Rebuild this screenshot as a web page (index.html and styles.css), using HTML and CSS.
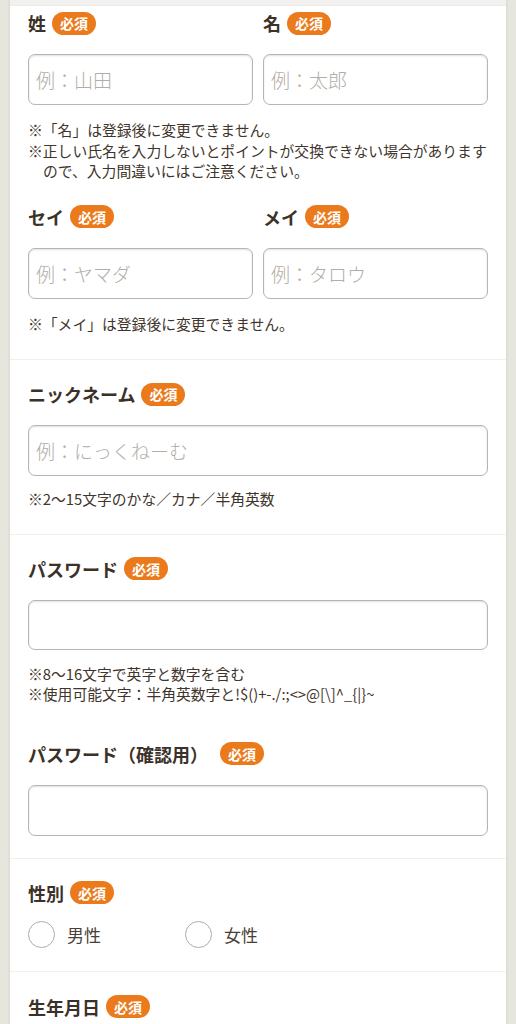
FILE: index.html
```html
<!DOCTYPE html>
<html lang="ja">
<head>
<meta charset="utf-8">
<title>会員登録</title>
<link rel="stylesheet" href="styles.css">
</head>
<body>
<div class="page">
  <div class="card">
    <div class="topbar"></div>

    <section class="sec sec-first">
      <div class="pair">
        <div class="field">
          <div class="label">姓<span class="badge">必須</span></div>
          <input class="input" type="text" placeholder="例：山田">
        </div>
        <div class="field">
          <div class="label">名<span class="badge">必須</span></div>
          <input class="input" type="text" placeholder="例：太郎">
        </div>
      </div>
      <div class="notes">
        <p class="note">※「名」は登録後に変更できません。</p>
        <p class="note">※正しい氏名を入力しないとポイントが交換できない場合がありますので、入力間違いにはご注意ください。</p>
      </div>
      <div class="pair pair-next">
        <div class="field">
          <div class="label">セイ<span class="badge">必須</span></div>
          <input class="input" type="text" placeholder="例：ヤマダ">
        </div>
        <div class="field">
          <div class="label">メイ<span class="badge">必須</span></div>
          <input class="input" type="text" placeholder="例：タロウ">
        </div>
      </div>
      <div class="notes">
        <p class="note">※「メイ」は登録後に変更できません。</p>
      </div>
    </section>

    <section class="sec">
      <div class="label">ニックネーム<span class="badge">必須</span></div>
      <input class="input" type="text" placeholder="例：にっくねーむ">
      <div class="notes notes-tight">
        <p class="note">※2〜15文字のかな／カナ／半角英数</p>
      </div>
    </section>

    <section class="sec sec-pw">
      <div class="label">パスワード<span class="badge">必須</span></div>
      <input class="input input-pw" type="password">
      <div class="notes notes-pw">
        <p class="note">※8〜16文字で英字と数字を含む</p>
        <p class="note">※使用可能文字：半角英数字と!$()+-./:;&lt;&gt;@[\]^_{|}~</p>
      </div>
      <div class="label label-next">パスワード（確認用）<span class="badge badge-wide">必須</span></div>
      <input class="input" type="password">
    </section>

    <section class="sec sec-gender">
      <div class="label">性別<span class="badge">必須</span></div>
      <div class="radios">
        <label class="radio"><span class="circle"></span>男性</label>
        <label class="radio"><span class="circle"></span>女性</label>
      </div>
    </section>

    <section class="sec sec-birth">
      <div class="label">生年月日<span class="badge">必須</span></div>
    </section>
  </div>
</div>
</body>
</html>
```

FILE: styles.css
```css
* { box-sizing: border-box; }

html, body {
  margin: 0;
  padding: 0;
  background: #e7e6de;
}

body {
  font-family: "Noto Sans CJK JP", "Noto Sans", sans-serif;
  color: #3b3128;
}

.page {
  padding: 0 10px;
  min-height: 1024px;
}

.card {
  background: #ffffff;
  min-height: 1024px;
  box-shadow: 0 0 3px rgba(0, 0, 0, 0.12);
}

.topbar {
  height: 6px;
  background: #f1f1f0;
  border-bottom: 1px solid #ececea;
}

.sec {
  padding: 22px 18px 24px;
  border-top: 1px solid #f1f0ec;
}

.sec-first {
  border-top: none;
  padding-top: 5px;
  padding-bottom: 25px;
}

.pair {
  display: grid;
  grid-template-columns: 1fr 1fr;
  gap: 10px;
}

.pair-next { margin-top: 23px; }

.field {
  display: flex;
  flex-direction: column;
}

.label {
  display: flex;
  align-items: center;
  gap: 6px;
  height: 24px;
  font-size: 18px;
  font-weight: 700;
  line-height: 24px;
  margin-bottom: 19px;
  color: #3b3128;
}

.label-next { margin-top: 37px; }

.badge {
  display: inline-flex;
  align-items: center;
  justify-content: center;
  height: 23px;
  padding: 0 8px;
  border-radius: 12px;
  background: #ea7a1c;
  color: #ffffff;
  font-size: 14px;
  font-weight: 700;
  letter-spacing: 0;
}

.badge-wide { margin-left: 6px; }

.input {
  display: block;
  width: 100%;
  height: 51px;
  margin: 0;
  padding: 0 7px;
  border: 1.5px solid #b9b4ad;
  border-radius: 7px;
  background: #ffffff;
  box-shadow: inset 0 1px 2px rgba(0, 0, 0, 0.12);
  font-family: "Noto Sans CJK JP", "Noto Sans", sans-serif;
  font-size: 19px;
  font-weight: 300;
  color: #3b3128;
  outline: none;
}

.input-pw { height: 50px; }

.input::placeholder {
  color: #b3ada6;
}

.notes {
  margin-top: 15px;
}

.notes-tight { margin-top: 13px; }
.notes-pw { margin-top: 14px; }

.note {
  margin: 0;
  padding-left: 15px;
  text-indent: -15px;
  font-size: 14.8px;
  line-height: 20.5px;
  color: #3f352c;
}

.sec-pw { padding-bottom: 22px; }

.sec-gender { padding-bottom: 23px; }

.sec-gender .label { margin-bottom: 16px; }

.radios {
  display: flex;
  align-items: center;
}

.radio {
  display: flex;
  align-items: center;
  gap: 12px;
  width: 157px;
  height: 27px;
  font-size: 17px;
  color: #4a4037;
}

.circle {
  width: 27px;
  height: 27px;
  border-radius: 50%;
  border: 1.5px solid #b0aba5;
  background: #ffffff;
  flex: none;
}

.sec-birth { padding-top: 23px; }
```
